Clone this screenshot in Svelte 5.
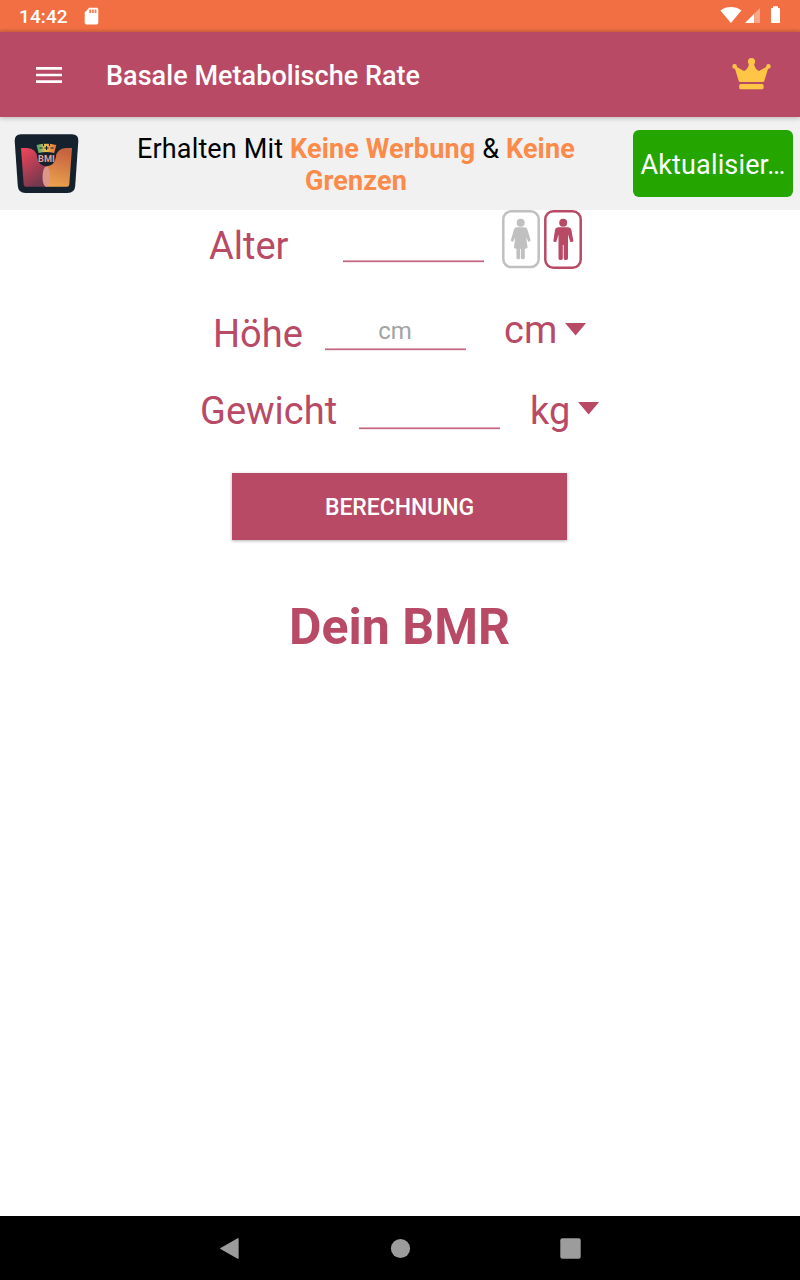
<script>
	let gender = $state('male')
	let age = $state('')
	let height = $state('')
	let weight = $state('')
</script>


<div class="screen">
	<div class="status-bar">
		<span class="clock">14:42</span>
		<svg class="sd-card" width="15" height="18" viewBox="0 0 15 18">
			<path d="M5.2 0.7H12.6C13.6 0.7 14.3 1.4 14.3 2.4V15.6C14.3 16.6 13.6 17.4 12.6 17.4H2.4C1.4 17.4 0.7 16.6 0.7 15.6V5.4Z" fill="#fff" />
			<path d="M5.2 2.6H7.1V6H5.2ZM7.9 2.6H9.8V6H7.9ZM10.6 2.6H12.4V6H10.6Z" fill="#f3835a" />
		</svg>
		<svg class="signals" width="62" height="20" viewBox="0 0 62 20">
			<path d="M0.4 3.4C6.3 -1.2 15.5 -1.2 21.4 3.4L10.9 16Z" fill="#fff" />
			<path d="M25 16L34.2 6.8V16Z" fill="#fff" />
			<path d="M40 1V16H34.2V6.8Z" fill="#f7a68b" />
			<path d="M53 -0.7H58V1H59.3Q60 1 60 1.8V15.2Q60 16 59.3 16H51.7Q51 16 51 15.2V1.8Q51 1 51.7 1H53Z" fill="#fff" />
		</svg>
	</div>

	<header>
		<svg class="menu" width="26" height="16" viewBox="0 0 26 16">
			<path d="M0 0H26V2.7H0ZM0 6.7H26V9.3H0ZM0 13.3H26V16H0Z" fill="#fff" />
		</svg>
		<h1>Basale Metabolische Rate</h1>
		<svg class="crown" width="40" height="34" viewBox="0 0 40 34">
			<g fill="#ffc545">
				<path d="M2 8.5L12 14Q16.2 12.5 17.3 5.5H21.7Q22.8 12.5 27 14L37 8.5L32.2 24.2Q31.9 25 31 25H8Q7.1 25 6.8 24.2Z" />
				<circle cx="19.5" cy="4.5" r="3.6" />
				<circle cx="2.6" cy="9.4" r="2.3" />
				<circle cx="36.4" cy="9.4" r="2.3" />
				<rect x="7.2" y="27" width="24.4" height="5.3" rx="1.6" />
			</g>
		</svg>
	</header>

	<section class="banner">
		<svg class="logo" width="65" height="60" viewBox="0 0 65 60">
			<defs>
				<linearGradient id="left" x1="0" y1="0" x2="0.5" y2="1">
					<stop offset="0" stop-color="#f4455a" />
					<stop offset="1" stop-color="#76384e" />
				</linearGradient>
				<linearGradient id="right" x1="0.4" y1="0" x2="0.2" y2="1">
					<stop offset="0" stop-color="#c5623f" />
					<stop offset="1" stop-color="#eda34e" />
				</linearGradient>
				<linearGradient id="scale">
					<stop offset="0" stop-color="#42a779" />
					<stop offset="0.45" stop-color="#e6bf4d" />
					<stop offset="1" stop-color="#f06b3a" />
				</linearGradient>
			</defs>
			<path d="M7 0.2H58Q64.7 0.2 64.3 7L61.2 52Q60.7 59 53.5 59H11.5Q4.3 59 3.8 52L0.7 7Q0.5 0.2 7 0.2Z" fill="#15212d" />
			<path d="M7 14H13Q22.5 14.5 23.2 23.5Q24.5 31.8 32.4 32.2V52.8H12Q10 52.8 9.7 50.6Z" fill="url(#left)" />
			<path d="M58 14H52Q42.5 14.5 41.8 23.5Q40.5 31.8 32.4 32.2V52.8H53Q55 52.8 55.3 50.6Z" fill="url(#right)" />
			<ellipse cx="32.3" cy="42.7" rx="3.8" ry="10.3" fill="#dc968a" />
			<path d="M22.5 11Q32.3 8.3 42.3 11L40.2 19Q32.3 17 24.6 19Z" fill="url(#scale)" />
			<path d="M25.5 14H28.5M30.5 14H34.5M32.5 12V16M36.5 14H39.5M29.5 10V12M35.5 10V12" stroke="#15212d" stroke-width="1" fill="none" />
			<text x="32.4" y="27.6" text-anchor="middle">BMI</text>
		</svg>
		<p>Erhalten Mit <b>Keine Werbung</b> &amp; <b>Keine</b><br /><b>Grenzen</b></p>
		<button class="upgrade">Aktualisier…</button>
	</section>

	<main>
		<div class="row age">
			<label for="age">Alter</label>
			<input id="age" bind:value={age} />
			<div class="genders">
				<button class="gender" class:selected={gender === 'female'} aria-label="Frau" onclick={() => gender = 'female'}>
					<svg width="38" height="59" viewBox="0 0 38 59">
						<rect x="1.3" y="1.3" width="35.4" height="55.8" rx="8" />
						<g>
							<circle cx="18.7" cy="12.7" r="4" />
							<path d="M15 17.2H22.4Q24.8 17.2 25.4 19.6L28.6 30.2Q28.4 32 26.2 31.6L24.2 27.5L25.6 37.5Q25 38.8 22.8 38.8V48.2Q22.6 49.3 20.9 49.3Q19.2 49.3 19 48.2V39H18.2V48.2Q18 49.3 16.3 49.3Q14.6 49.3 14.4 48.2V38.8Q12.4 38.8 11.9 37.5L13.3 27.5L11.2 31.6Q9 32 8.8 30.2L12 19.6Q12.6 17.2 15 17.2Z" />
						</g>
					</svg>
				</button>
				<button class="gender" class:selected={gender === 'male'} aria-label="Mann" onclick={() => gender = 'male'}>
					<svg width="38" height="59" viewBox="0 0 38 59">
						<rect x="1.3" y="1.3" width="35.4" height="56.4" rx="8" />
						<g>
							<circle cx="19.2" cy="12.7" r="4" />
							<path d="M14.5 17.2H23.9Q26.8 17.2 27.4 20L29.4 31Q28.8 32.4 26.2 31.8L24 24.5V48.5Q23.8 50 21.8 50Q19.9 50 19.7 48.5V35H18.8V48.5Q18.6 50 16.6 50Q14.7 50 14.5 48.5V24.5L12.3 31.8Q9.8 32.4 9.3 31L11 20Q11.6 17.2 14.5 17.2Z" />
						</g>
					</svg>
				</button>
			</div>
		</div>

		<div class="row height">
			<label for="height">Höhe</label>
			<input id="height" placeholder="cm" bind:value={height} />
			<div class="unit">
				<span>cm</span>
				<svg width="22" height="13" viewBox="0 0 22 13"><path d="M0.1 0H21.1L10.6 12.4Z" /></svg>
			</div>
		</div>

		<div class="row weight">
			<label for="weight">Gewicht</label>
			<input id="weight" bind:value={weight} />
			<div class="unit">
				<span>kg</span>
				<svg width="22" height="13" viewBox="0 0 22 13"><path d="M0.1 0H21.1L10.6 12.4Z" /></svg>
			</div>
		</div>

		<button class="calculate">BERECHNUNG</button>
		<h2>Dein BMR</h2>
	</main>

	<nav>
		<svg width="20" height="22" viewBox="0 0 20 22"><path class="back" d="M18 0.8V20.2L0.8 10.5Z" /></svg>
		<svg width="20" height="22" viewBox="0 0 20 22"><circle cx="10.5" cy="10.5" r="9.6" /></svg>
		<svg width="21" height="22" viewBox="0 0 21 22"><rect x="0.3" y="0.2" width="20.4" height="20.6" rx="2" /></svg>
	</nav>
</div>


<style>
	:global(body) {
		margin: 0;
	}

	.screen {
		display: flex;
		flex-direction: column;
		width: 800px;
		height: 1280px;
		overflow: hidden;
		background-color: #fff;
		font-family: Roboto, sans-serif;
	}

	svg {
		display: block;
		flex: none;
		overflow: visible;
	}

	button {
		border: 0;
		padding: 0;
		font-family: inherit;
		cursor: pointer;
	}

	.status-bar {
		display: flex;
		box-sizing: border-box;
		height: 32px;
		padding: 7px 18px 0 19px;
		background: linear-gradient(#f26f43 28px, #dc673f 32px);
		color: #fff;
	}

	.clock {
		width: 65px;
		font-size: 19px;
		font-weight: 500;
		letter-spacing: 0.1px;
		line-height: 20px;
	}

	.signals {
		margin-left: auto;
	}

	header {
		position: relative;
		display: flex;
		align-items: center;
		box-sizing: border-box;
		height: 85px;
		padding: 0 28px 0 36px;
		background-color: #b84a66;
		box-shadow: 0 1px 5px rgba(0, 0, 0, 0.25);
		z-index: 1;
	}

	h1 {
		margin: 3px 0 0 44px;
		color: #fff;
		font-size: 27px;
		font-weight: 500;
		letter-spacing: 0.04px;
		line-height: 32px;
	}

	.menu {
		margin-top: 1px;
	}

	.crown {
		margin: -2px 0 0 auto;
	}

	.banner {
		display: flex;
		box-sizing: border-box;
		height: 93px;
		padding: 13px 7px 0 14px;
		background-color: #f1f1f1;
	}

	.logo {
		margin-top: 4px;
	}

	.logo text {
		fill: #e3a29a;
		font-size: 9.2px;
		font-weight: 700;
	}

	.banner p {
		width: 450px;
		margin: 3px 52px 0 52px;
		color: #000;
		font-size: 27px;
		letter-spacing: 0.14px;
		line-height: 32px;
		text-align: center;
		white-space: nowrap;
	}

	.banner b {
		color: #fc8a49;
	}

	.upgrade {
		width: 160px;
		height: 67px;
		padding-top: 3px;
		border-radius: 6px;
		background-color: #24a500;
		color: #fff;
		font-size: 27px;
		letter-spacing: 0.15px;
	}

	main {
		display: flex;
		flex: 1;
		flex-direction: column;
		align-items: center;
	}

	.row {
		display: flex;
		align-items: flex-start;
		box-sizing: border-box;
		width: 100%;
		height: 78px;
		color: #b84a66;
		font-size: 38px;
		line-height: 44px;
	}

	label {
		flex: none;
	}

	input {
		flex: none;
		box-sizing: border-box;
		width: 141px;
		height: 45px;
		padding: 8px 1px 3px 0;
		border: 0;
		outline: none;
		background: linear-gradient(#dfa6b4 1px, #c4667e 1px 2px, #f6e6ea 2px) bottom / 100% 3px no-repeat;
		color: #b84a66;
		font-family: inherit;
		font-size: 24px;
		text-align: center;
	}

	input::placeholder {
		color: #a3a3a3;
		opacity: 1;
	}

	.age {
		padding-left: 209px;
	}

	.age label {
		width: 134px;
		margin-top: 14px;
	}

	.age input {
		margin-top: 8px;
	}

	.genders {
		display: flex;
		gap: 4px;
		margin-left: 18px;
	}

	.gender {
		background: none;
	}

	.gender rect {
		fill: #fff;
		stroke: #c0c0c0;
		stroke-width: 2.5;
	}

	.gender g {
		fill: #c0c0c0;
	}

	.gender.selected rect {
		stroke: #b84a66;
	}

	.gender.selected g {
		fill: #b84a66;
	}

	.height {
		padding-left: 213px;
	}

	.height label {
		width: 112px;
		margin-top: 24px;
	}

	.height input {
		margin-top: 18px;
	}

	.unit {
		display: flex;
		gap: 8px;
		fill: #b84a66;
	}

	.unit svg {
		margin-top: 15px;
	}

	.height .unit {
		margin: 20px 0 0 38px;
	}

	.weight {
		padding-left: 200px;
	}

	.weight label {
		width: 159px;
		margin-top: 23px;
	}

	.weight input {
		margin-top: 19px;
	}

	.weight .unit {
		margin: 23px 0 0 30px;
	}

	.weight .unit svg {
		margin-top: 13px;
	}

	.calculate {
		width: 335px;
		height: 67px;
		margin: 29px 1px 0 0;
		padding-top: 1px;
		background-color: #b84a66;
		box-shadow: 0 1px 3px rgba(0, 0, 0, 0.3);
		color: #fff;
		font-size: 23px;
		font-weight: 500;
		letter-spacing: -0.05px;
	}

	h2 {
		margin: 57px 1px 0 0;
		color: #b84a66;
		font-size: 50px;
		font-weight: 700;
		line-height: 60px;
	}

	nav {
		display: flex;
		justify-content: space-between;
		box-sizing: border-box;
		height: 64px;
		padding: 22px 219px 0 220px;
		background-color: #000;
		fill: #9c9c9c;
	}

	.back {
		stroke: #9c9c9c;
		stroke-width: 1.3;
		stroke-linejoin: round;
	}
</style>
